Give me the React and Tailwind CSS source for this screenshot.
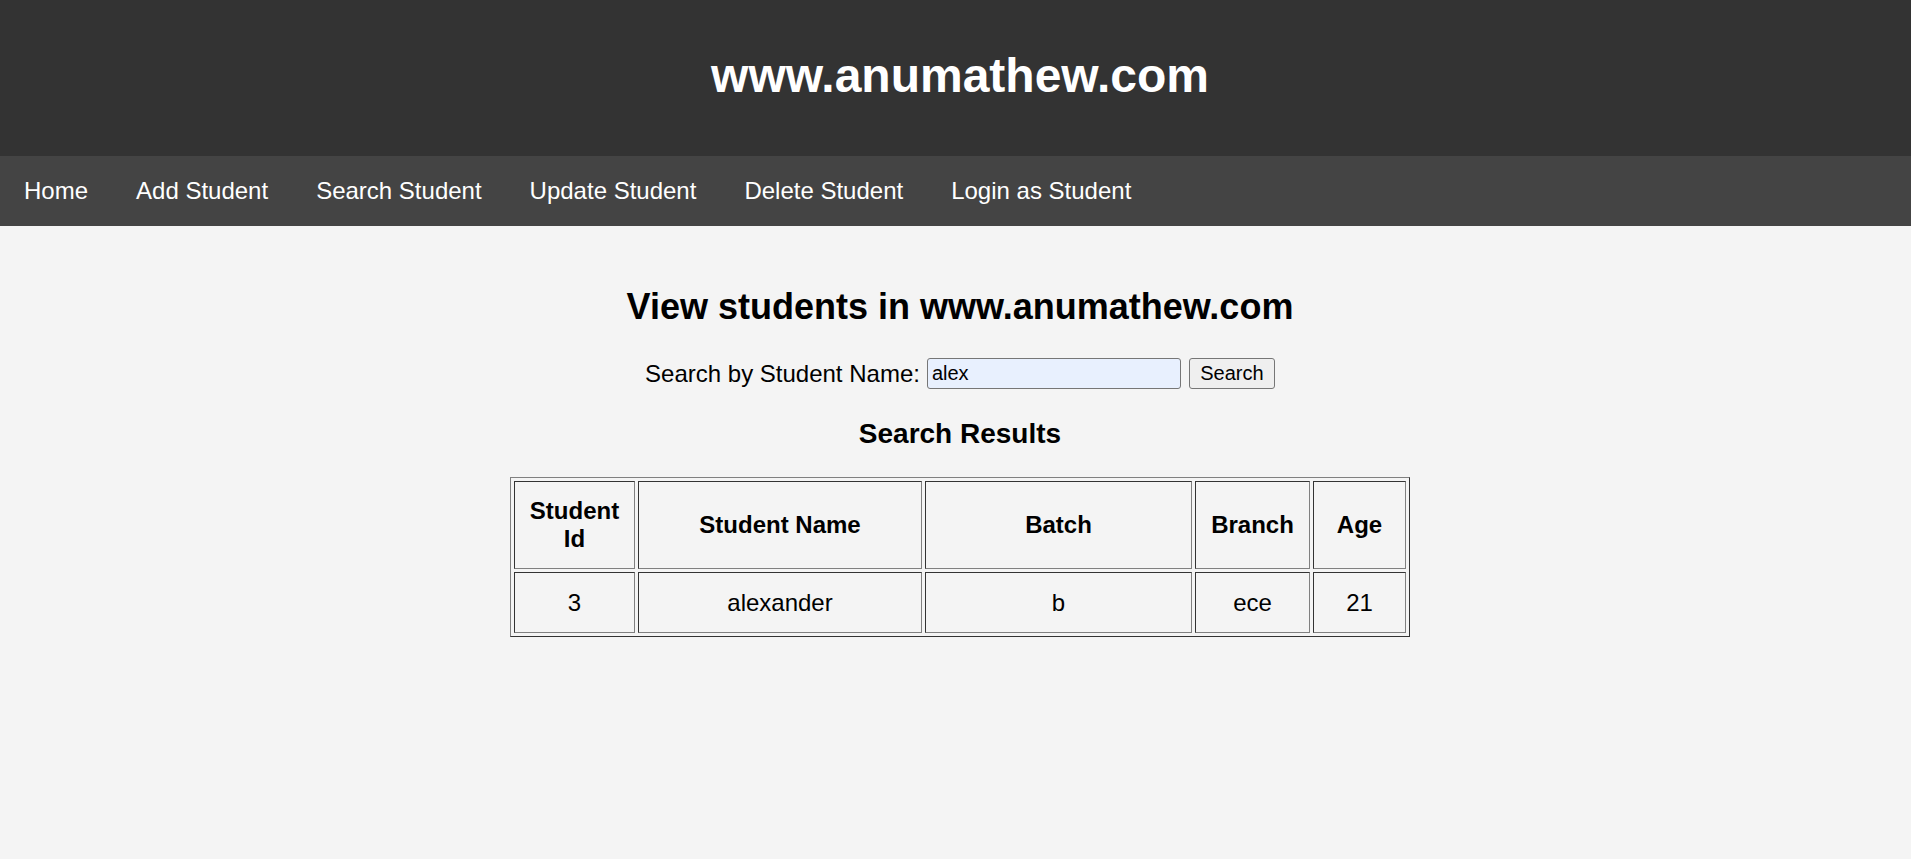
import React, { useState } from 'react';

const links = ['Home', 'Add Student', 'Search Student', 'Update Student', 'Delete Student', 'Login as Student'];

const columns = [
  { label: 'Student Id', w: 'w-[121px]' },
  { label: 'Student Name', w: 'w-[284px]' },
  { label: 'Batch', w: 'w-[267px]' },
  { label: 'Branch', w: 'w-[115px]' },
  { label: 'Age', w: 'w-[93px]' },
];

const results = [{ id: 3, name: 'alexander', batch: 'b', branch: 'ece', age: 21 }];

const cellBorder = 'border border-t-[#333] border-l-[#333] border-b-[#808080] border-r-[#808080]';

export default function App() {
  const [query, setQuery] = useState('alex');

  return (
    <div className="min-h-screen bg-[#f4f4f4] text-black" style={{ fontFamily: '"Liberation Sans", Arial, sans-serif' }}>
      {/* Header */}
      <header className="h-[156px] bg-[#333333] pt-[48px] pl-[9px] text-center">
        <h1 className="text-[48px] font-bold leading-[normal] text-white">www.anumathew.com</h1>
      </header>

      {/* Nav */}
      <nav className="flex h-[70px] items-center bg-[#444444]">
        {links.map((l) => (
          <a key={l} href="#" className="px-6 text-[24px] leading-[normal] text-white">
            {l}
          </a>
        ))}
      </nav>

      {/* Content */}
      <main className="flex flex-col items-center pl-[9px] pt-[60px]">
        <h2 className="text-[36px] font-bold leading-[normal]">View students in www.anumathew.com</h2>

        <form className="mt-[30px] flex items-center gap-[7px]" onSubmit={(e) => e.preventDefault()}>
          <label className="text-[24px] leading-[normal]">Search by Student Name:</label>
          <input
            value={query}
            onChange={(e) => setQuery(e.target.value)}
            className="h-[31px] w-[254px] rounded-[3px] border border-[#767676] bg-[#e8f0fe] pl-[4px] text-[20px] leading-[normal] outline-none"
          />
          <button className="ml-[1px] h-[31px] w-[86px] rounded-[3px] border border-[#767676] bg-[#efefef] text-[20px] leading-[normal]">
            Search
          </button>
        </form>

        <h3 className="mt-[29px] text-[28px] font-bold leading-[normal]">Search Results</h3>

        <table className="mt-[27px] w-[900px] table-fixed border-separate border-spacing-[3px] border border-t-[#808080] border-l-[#808080] border-b-[#333] border-r-[#333] text-[24px] leading-[normal]">
          <thead>
            <tr>
              {columns.map((c) => (
                <th key={c.label} className={`${c.w} h-[88px] px-[12px] text-center font-bold ${cellBorder}`}>
                  {c.label}
                </th>
              ))}
            </tr>
          </thead>
          <tbody>
            {results.map((r) => (
              <tr key={r.id}>
                <td className={`h-[61px] text-center ${cellBorder}`}>{r.id}</td>
                <td className={`h-[61px] text-center ${cellBorder}`}>{r.name}</td>
                <td className={`h-[61px] text-center ${cellBorder}`}>{r.batch}</td>
                <td className={`h-[61px] text-center ${cellBorder}`}>{r.branch}</td>
                <td className={`h-[61px] text-center ${cellBorder}`}>{r.age}</td>
              </tr>
            ))}
          </tbody>
        </table>
      </main>
    </div>
  );
}
